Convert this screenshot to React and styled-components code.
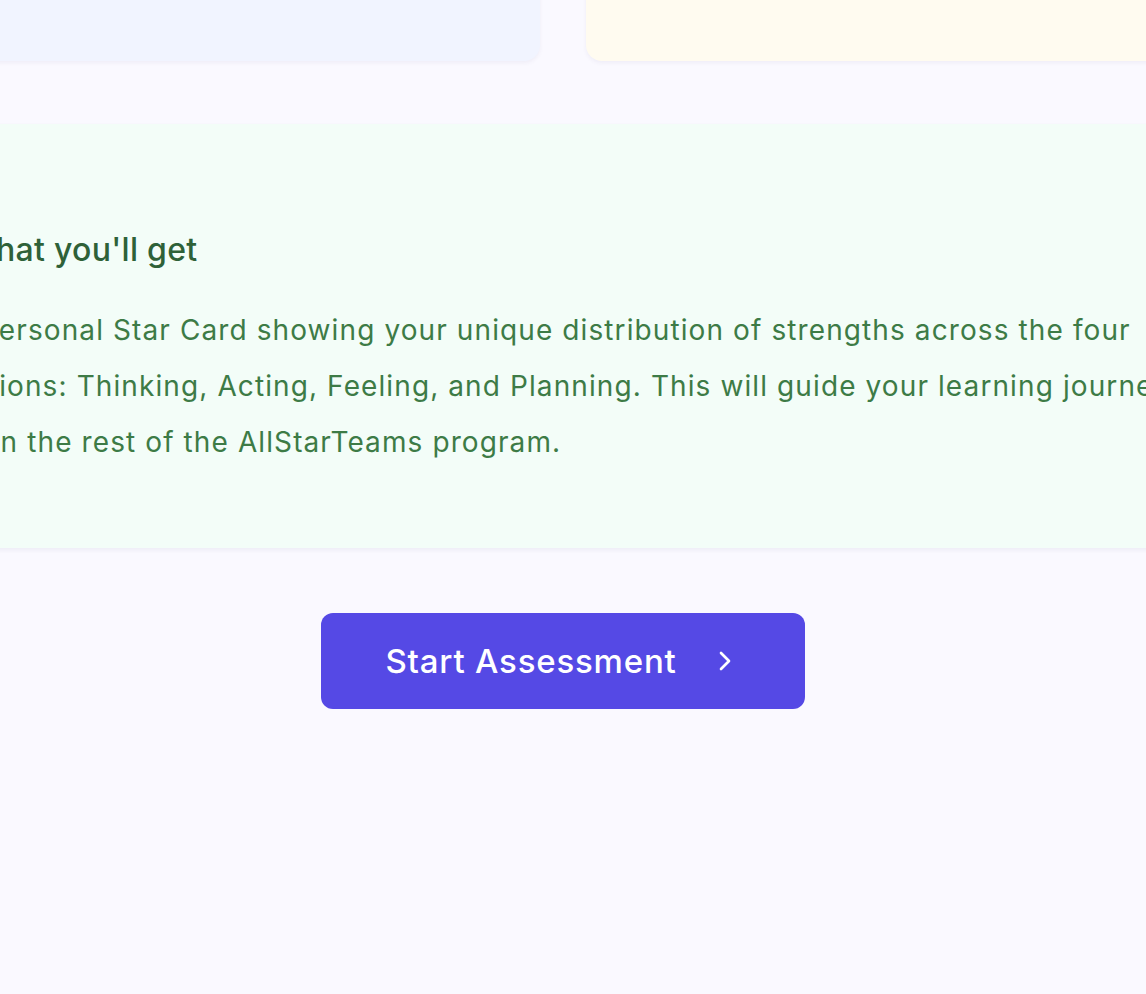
import React from "react";
import styled, { createGlobalStyle } from "styled-components";
import { ChevronRight } from "lucide-react";

const GlobalStyle = createGlobalStyle`
  html, body {
    margin: 0;
    padding: 0;
    background: #faf9ff;
    overflow: hidden;
  }
  body {
    font-family: Inter, "Noto Sans", "Liberation Sans", sans-serif;
    -webkit-font-smoothing: antialiased;
  }
`;

const Viewport = styled.div`
  width: 1146px;
  height: 994px;
  overflow: hidden;
  background: #faf9ff;
`;

const Content = styled.div`
  width: 1439px;
  margin-left: -156.5px;
  margin-top: -120px;
  display: flex;
  flex-direction: column;
`;

const CardRow = styled.div`
  display: grid;
  grid-template-columns: 1fr 1fr;
  gap: 46px;
`;

const InfoCard = styled.div`
  height: 181px;
  border-radius: 16px;
  background: ${(p) => p.$bg};
  box-shadow: 0 2px 4px rgba(60, 50, 120, 0.06);
`;

const GetPanel = styled.section`
  margin-top: 63px;
  background: #f3fdf8;
  padding: 98px 48px 78px 53px;
  box-shadow: 0 2px 4px rgba(60, 50, 120, 0.07);
  display: flex;
  flex-direction: column;
  gap: 24px;
`;

const PanelTitle = styled.h3`
  margin: 0;
  display: flex;
  align-items: center;
  gap: 27px;
  font-size: 32px;
  line-height: 56px;
  font-weight: 500;
  color: #2e6138;
  letter-spacing: 0.3px;
`;

const TitleIcon = styled.span`
  width: 40px;
  height: 40px;
  flex: none;
`;

const PanelText = styled.p`
  margin: 0;
  font-size: 28px;
  line-height: 56px;
  color: #3d7b46;
  white-space: nowrap;
  letter-spacing: 1.1px;
  text-indent: 10px;
`;

const Actions = styled.div`
  display: flex;
  justify-content: center;
  padding-top: 65px;
`;

const StartButton = styled.button`
  display: inline-flex;
  align-items: center;
  gap: 32px;
  height: 96px;
  padding: 0 64px;
  border: none;
  border-radius: 12px;
  background: #5549e5;
  color: #ffffff;
  font-family: Inter, "Noto Sans", sans-serif;
  font-size: 33px;
  line-height: 48px;
  font-weight: 500;
  letter-spacing: 0.8px;
  cursor: pointer;
  svg {
    flex: none;
  }
`;

export default function App() {
  return (
    <>
      <GlobalStyle />
      <Viewport>
        <Content>
          <CardRow>
            <InfoCard $bg="#f1f4ff" />
            <InfoCard $bg="#fffbf0" />
          </CardRow>
          <GetPanel>
            <PanelTitle>
              <TitleIcon />
              What you'll get
            </PanelTitle>
            <PanelText>
              Your personal Star Card showing your unique distribution of strengths across the four
              <br />
              dimensions: Thinking, Acting, Feeling, and Planning. This will guide your learning journey
              <br />
              ahead in the rest of the AllStarTeams program.
            </PanelText>
          </GetPanel>
          <Actions>
            <StartButton>
              Start Assessment
              <ChevronRight size={32} strokeWidth={2} />
            </StartButton>
          </Actions>
        </Content>
      </Viewport>
    </>
  );
}
